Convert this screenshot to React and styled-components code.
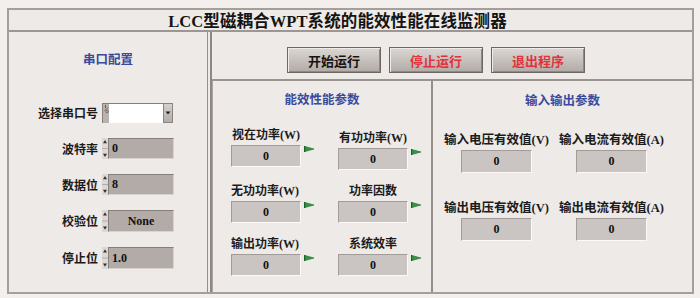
import React from 'react';
import styled, { createGlobalStyle } from 'styled-components';

const Global = createGlobalStyle`
  html, body { margin: 0; padding: 0; background: #f3efec; }
  body {
    width: 700px; height: 298px; overflow: hidden;
    font-family: "Liberation Serif", "Noto Sans CJK SC", serif;
    color: #1b1b1b;
  }
`;

const Page = styled.div`
  padding: 8px 6px 0 7px;
`;

const Frame = styled.div`
  height: 286px;
  box-sizing: border-box;
  border: 2px solid #a59e9b;
  background: #eeeae7;
  display: flex;
  flex-direction: column;
`;

const TitleBar = styled.div`
  height: 22px;
  box-sizing: border-box;
  border-bottom: 2px solid #9d9693;
  display: flex;
  align-items: center;
  justify-content: center;
  padding-right: 26px;
  font-size: 16.5px;
  font-weight: 700;
  letter-spacing: 0.1px;
  color: #141414;
`;

const Body = styled.div`
  flex: 1;
  display: flex;
  min-height: 0;
`;

const LeftPanel = styled.div`
  width: 199px;
  box-sizing: border-box;
  border-right: 1px solid #958e8b;
  display: flex;
  flex-direction: column;
  padding-top: 21px;
`;

const PanelTitle = styled.div`
  font-size: 12.5px;
  line-height: 14px;
  font-weight: 600;
  color: #3a4a9c;
  text-align: center;
  white-space: nowrap;
`;

const PortForm = styled.div`
  margin-top: 36px;
  display: flex;
  flex-direction: column;
  gap: 15px;
`;

const FormRow = styled.div`
  display: grid;
  grid-template-columns: 89px auto;
  column-gap: 4px;
  align-items: center;
  height: ${p => p.$h || 21}px;
`;

const FormLabel = styled.span`
  text-align: right;
  font-size: 12px;
  font-weight: 600;
  white-space: nowrap;
`;

const Control = styled.div`
  display: flex;
  height: 100%;
`;

const SpinCol = styled.div`
  width: 6px;
  background: #ddd8d5;
  display: flex;
  align-items: stretch;
`;

const NumBox = styled.div`
  width: 66px;
  box-sizing: border-box;
  background: #b3aba8;
  border: 1px solid;
  border-color: #857e7b #d8d3d0 #d8d3d0 #857e7b;
  display: flex;
  align-items: center;
  justify-content: ${p => (p.$center ? 'center' : 'flex-start')};
  padding-left: ${p => (p.$center ? 0 : 3)}px;
  font-size: 12px;
  font-weight: 700;
  color: #111;
`;

const IoTag = styled.div`
  width: 6px;
  background: #b9b2af;
  border-top: 1px solid #857e7b;
  border-left: 1px solid #857e7b;
  display: flex;
  justify-content: center;
`;

const WhiteField = styled.div`
  width: 54px;
  background: #ffffff;
  border-top: 1px solid #857e7b;
`;

const DropBtn = styled.div`
  width: 10px;
  box-sizing: border-box;
  background: linear-gradient(#d6d1ce, #b4adaa);
  border: 1px solid #8a8380;
  display: flex;
  align-items: center;
  justify-content: center;
`;

const RightSection = styled.div`
  flex: 1;
  margin-left: 2px;
  border-left: 2px solid #8e8784;
  display: flex;
  flex-direction: column;
`;

const ButtonRow = styled.div`
  height: 49px;
  box-sizing: border-box;
  border-bottom: 2px solid #9a9390;
  display: flex;
  gap: 8px;
  padding: 15px 0 0 75px;
`;

const Button = styled.button`
  width: 94px;
  height: 26px;
  box-sizing: border-box;
  border: 1px solid #6d6764;
  background: linear-gradient(#dcd7d4 0%, #c9c3c0 45%, #b1aaa7 100%);
  box-shadow: inset 1px 1px 0 #efebe9, inset -1px -1px 0 #8f8885;
  font-family: "Liberation Serif", "Noto Sans CJK SC", serif;
  font-size: 13px;
  font-weight: 600;
  color: ${p => (p.$danger ? '#e2323c' : '#151515')};
  padding: 0;
  cursor: pointer;
`;

const Panels = styled.div`
  flex: 1;
  display: flex;
`;

const MidPanel = styled.div`
  width: 221px;
  box-sizing: border-box;
  border-left: 1px solid #aca5a2;
  border-right: 2px solid #958e8b;
  padding-top: 12px;
  display: flex;
  flex-direction: column;
`;

const MidGrid = styled.div`
  margin-top: 21px;
  display: grid;
  grid-template-columns: 70px 70px;
  column-gap: 37px;
  row-gap: 14px;
  padding-left: 18px;
`;

const Cell = styled.div`
  display: flex;
  flex-direction: column;
  align-items: center;
  gap: ${p => p.$gap || 3}px;
  margin-top: ${p => p.$drop || 0}px;
`;

const CellLabel = styled.span`
  font-size: ${p => p.$size || 12}px;
  line-height: ${p => p.$lh || 14}px;
  font-weight: 600;
  white-space: nowrap;
  margin-left: ${p => p.$nudge || 0}px;
`;

const Display = styled.div`
  position: relative;
  width: ${p => p.$w || 70}px;
  height: ${p => p.$h || 22}px;
  box-sizing: border-box;
  background: #cac5c2;
  border: 1px solid;
  border-color: #a29b98 #fbfaf9 #fbfaf9 #a29b98;
  display: flex;
  align-items: center;
  justify-content: center;
  font-size: 12px;
  font-weight: 700;
  color: #111;
`;

const Flag = styled.svg`
  position: absolute;
  left: ${p => p.$left || 72}px;
  top: 0px;
`;

const IoPanel = styled.div`
  flex: 1;
  padding-top: 13px;
  display: flex;
  flex-direction: column;
`;

const IoGrid = styled.div`
  margin-top: 24px;
  display: grid;
  grid-template-columns: 115px 115px;
  row-gap: 27px;
  padding-left: 6px;
`;

const Spinner = () => (
  <SpinCol>
    <svg width="6" height="100%" viewBox="0 0 6 20" preserveAspectRatio="none">
      <polygon points="1,5 5,5 3,2" fill="#333" />
      <polygon points="1,15 5,15 3,18" fill="#333" />
      <line x1="0" y1="10" x2="6" y2="10" stroke="#9a9390" strokeWidth="0.6" />
    </svg>
  </SpinCol>
);

const GreenFlag = ({ left }) => (
  <Flag $left={left} width="11" height="6" viewBox="0 0 11 6">
    <line x1="0.5" y1="0" x2="0.5" y2="6" stroke="#1f5a2a" strokeWidth="1" />
    <polygon points="1,0.5 10,3 1,5.5" fill="#2f9a44" stroke="#1f6a2e" strokeWidth="0.6" />
  </Flag>
);

const mid = [
  ['视在功率(W)', 0, 0],
  ['有功功率(W)', 3, 0],
  ['无功功率(W)', 0, -2],
  ['功率因数', 0, 0],
  ['输出功率(W)', 0, -2],
  ['系统效率', 0, 0],
];

const io = ['输入电压有效值(V)', '输入电流有效值(A)', '输出电压有效值(V)', '输出电流有效值(A)'];

const port = [
  { label: '波特率', value: '0' },
  { label: '数据位', value: '8' },
  { label: '校验位', value: 'None', center: true, h: 22 },
  { label: '停止位', value: '1.0', h: 22 },
];

export default function App() {
  return (
    <>
      <Global />
      <Page>
        <Frame>
          <TitleBar>LCC型磁耦合WPT系统的能效性能在线监测器</TitleBar>
          <Body>
            <LeftPanel>
              <PanelTitle>串口配置</PanelTitle>
              <PortForm>
                <FormRow $h={20}>
                  <FormLabel>选择串口号</FormLabel>
                  <Control>
                    <IoTag>
                      <svg width="5" height="10" viewBox="0 0 5 10">
                        <line x1="1.5" y1="1" x2="1.5" y2="4" stroke="#444" strokeWidth="0.8" />
                        <line x1="0.5" y1="6.5" x2="4.5" y2="3.5" stroke="#444" strokeWidth="0.6" />
                        <circle cx="3" cy="7.5" r="1.2" fill="none" stroke="#444" strokeWidth="0.6" />
                      </svg>
                    </IoTag>
                    <WhiteField />
                    <DropBtn>
                      <svg width="6" height="4" viewBox="0 0 6 4">
                        <polygon points="0.5,0.5 5.5,0.5 3,3.5" fill="#222" />
                      </svg>
                    </DropBtn>
                  </Control>
                </FormRow>
                {port.map(r => (
                  <FormRow key={r.label} $h={r.h}>
                    <FormLabel>{r.label}</FormLabel>
                    <Control>
                      <Spinner />
                      <NumBox $center={r.center}>{r.value}</NumBox>
                    </Control>
                  </FormRow>
                ))}
              </PortForm>
            </LeftPanel>
            <RightSection>
              <ButtonRow>
                <Button>开始运行</Button>
                <Button $danger>停止运行</Button>
                <Button $danger>退出程序</Button>
              </ButtonRow>
              <Panels>
                <MidPanel>
                  <PanelTitle>能效性能参数</PanelTitle>
                  <MidGrid>
                    {mid.map(([label, drop, nudge]) => (
                      <Cell key={label} $drop={drop}>
                        <CellLabel $nudge={nudge}>{label}</CellLabel>
                        <Display>
                          0
                          <GreenFlag />
                        </Display>
                      </Cell>
                    ))}
                  </MidGrid>
                </MidPanel>
                <IoPanel>
                  <PanelTitle>输入输出参数</PanelTitle>
                  <IoGrid>
                    {io.map(label => (
                      <Cell key={label} $gap={2}>
                        <CellLabel $size={12.5} $lh={16}>{label}</CellLabel>
                        <Display $w={71} $h={23}>0</Display>
                      </Cell>
                    ))}
                  </IoGrid>
                </IoPanel>
              </Panels>
            </RightSection>
          </Body>
        </Frame>
      </Page>
    </>
  );
}
